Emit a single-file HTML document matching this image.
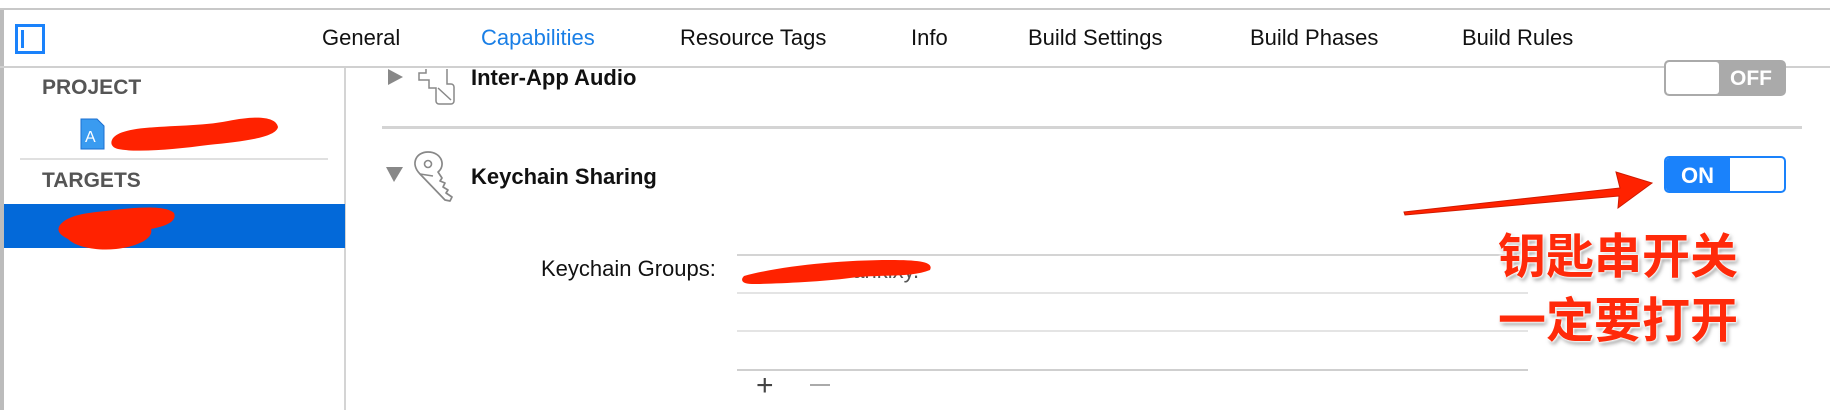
<!DOCTYPE html>
<html><head><meta charset="utf-8"><style>
*{margin:0;padding:0;box-sizing:border-box}
body{width:1830px;height:410px;background:#fff;position:relative;overflow:hidden;font-family:"Liberation Sans",sans-serif}
.a{position:absolute;white-space:nowrap}
.tab{position:absolute;top:25px;font-size:22px;color:#111}
.hl{position:absolute;height:2px;background:#d4d4d4}
</style></head><body>
<div class="hl" style="left:0;top:8px;width:1830px;height:2px;background:#c8c8c8"></div>
<div class="a" style="left:0;top:10px;width:4px;height:400px;background:#bcbcbc"></div>
<div class="hl" style="left:0;top:66px;width:1830px;background:#d0d0d0"></div>
<div class="a" style="left:15px;top:24px;width:30px;height:30px;border:3px solid #1a82fb"></div>
<div class="a" style="left:21px;top:30px;width:3px;height:18px;background:#1a82fb"></div>
<div class="tab" style="left:322px">General</div>
<div class="tab" style="left:481px;color:#1a7fe6">Capabilities</div>
<div class="tab" style="left:680px">Resource Tags</div>
<div class="tab" style="left:911px">Info</div>
<div class="tab" style="left:1028px">Build Settings</div>
<div class="tab" style="left:1250px">Build Phases</div>
<div class="tab" style="left:1462px">Build Rules</div>

<div class="a" style="left:344px;top:68px;width:2px;height:342px;background:#d4d4d4"></div>
<div class="a" style="left:42px;top:76px;font-size:21px;font-weight:bold;color:#555">PROJECT</div>
<svg class="a" style="left:80px;top:118px" width="26" height="32"><path d="M1 1h16l7 7v23H1z" fill="#3a9bf0" stroke="#1b6fd0"/><text x="5" y="24" font-size="16" fill="#fff" font-family="Liberation Sans">A</text></svg>
<svg class="a" style="left:108px;top:113px" width="175" height="42"><path d="M6 24 C20 10 80 16 120 8 C150 2 168 4 170 14 C168 24 140 28 100 32 C70 36 30 40 10 36 C2 34 2 28 6 24Z" fill="#ff2200"/></svg>
<div class="hl" style="left:20px;top:158px;width:308px;background:#e0e0e0"></div>
<div class="a" style="left:42px;top:169px;font-size:21px;font-weight:bold;color:#555">TARGETS</div>
<div class="a" style="left:4px;top:204px;width:341px;height:44px;background:#0369d9"></div>
<svg class="a" style="left:56px;top:205px" width="125" height="50"><path d="M4 20 C12 10 30 8 50 6 C80 2 110 0 118 8 C122 18 105 22 95 24 C98 34 80 42 60 44 C40 46 20 42 12 34 C4 30 0 26 4 20Z" fill="#ff2200"/></svg>

<svg class="a" style="left:386px;top:67px" width="80" height="40"><path d="M2 2 L17 10 L2 18Z" fill="#888"/><path d="M40 2v4h-7v7h10v8h7v13a3 3 0 003 3h12a3 3 0 003-3V20a3 3 0 00-3-3h-4V2" fill="none" stroke="#888" stroke-width="1.5"/><path d="M52 21l13 12" stroke="#888" stroke-width="1.5"/></svg>
<div class="a" style="left:471px;top:65px;font-size:22px;font-weight:bold;color:#111">Inter-App Audio</div>
<div class="a" style="left:1664px;top:60px;width:122px;height:36px;border:2px solid #aaa;border-radius:5px;background:#aaa;overflow:hidden"><div style="position:absolute;left:0;top:0;width:53px;height:32px;background:#fff;border-radius:3px"></div><div style="position:absolute;left:64px;top:5px;color:#fff;font-weight:bold;font-size:21px">OFF</div></div>
<div class="hl" style="left:382px;top:126px;width:1420px;height:3px"></div>

<svg class="a" style="left:384px;top:150px" width="82" height="54"><path d="M2 17 L19 17 L10 32Z" fill="#888"/><circle cx="44" cy="14" r="3.5" fill="none" stroke="#888" stroke-width="1.6"/><path d="M36 24 C26 14 32 2 44 2 C58 2 62 16 54 22 L58 28 L56 31 L61 33 L59 37 L64 40 L62 43 L68 47 L66 51 L61 50 Z" fill="none" stroke="#888" stroke-width="1.7" stroke-linejoin="round"/><path d="M36 24 L49 26" stroke="#888" stroke-width="1.6"/></svg>
<div class="a" style="left:471px;top:164px;font-size:22px;font-weight:bold;color:#111">Keychain Sharing</div>
<div class="a" style="left:1664px;top:156px;width:122px;height:37px;border:2px solid #1a82fb;border-radius:5px;background:#fff;overflow:hidden"><div style="position:absolute;left:0;top:0;width:64px;height:33px;background:#1a82fb"></div><div style="position:absolute;left:15px;top:5px;color:#fff;font-weight:bold;font-size:22px">ON</div></div>

<svg class="a" style="left:1400px;top:168px" width="260" height="48"><path d="M4 44 L220 20 L216 4 L252 15 L218 40 L219 28 L5 47Z" fill="#ff2200" stroke="#d01a00" stroke-width="1"/></svg>

<div class="a" style="left:541px;top:256px;font-size:22px;color:#111">Keychain Groups:</div>
<div class="hl" style="left:737px;top:254px;width:780px;height:2px"></div>
<div class="hl" style="left:737px;top:292px;width:791px;height:2px;background:#e4e4e4"></div>
<div class="hl" style="left:737px;top:330px;width:791px;height:2px;background:#e4e4e4"></div>
<div class="hl" style="left:737px;top:369px;width:791px;height:2px;background:#cfcfcf"></div>
<div class="a" style="left:840px;top:258px;font-size:22px;color:#555">bankixy.</div>
<svg class="a" style="left:740px;top:254px" width="200" height="34"><path d="M4 22 C40 12 100 6 150 6 C180 6 194 8 190 16 C170 24 140 20 110 24 C80 28 30 30 12 30 C2 30 0 26 4 22Z" fill="#ff2200"/></svg>
<div class="a" style="left:756px;top:369px;font-size:30px;color:#444">+</div>
<div class="a" style="left:810px;top:384px;width:20px;height:2px;background:#aaa"></div>

<div class="a" style="left:1498px;top:226px;font-size:48px;font-weight:bold;line-height:64px;color:#ff2a0a;font-family:'Liberation Sans','Noto Sans CJK SC',sans-serif;text-shadow:0 0 2px #fff,1px 1px 2px #fff,-1px -1px 2px #fff,2px 3px 4px rgba(0,0,0,.4)">钥匙串开关<br>一定要打开</div>
</body></html>
